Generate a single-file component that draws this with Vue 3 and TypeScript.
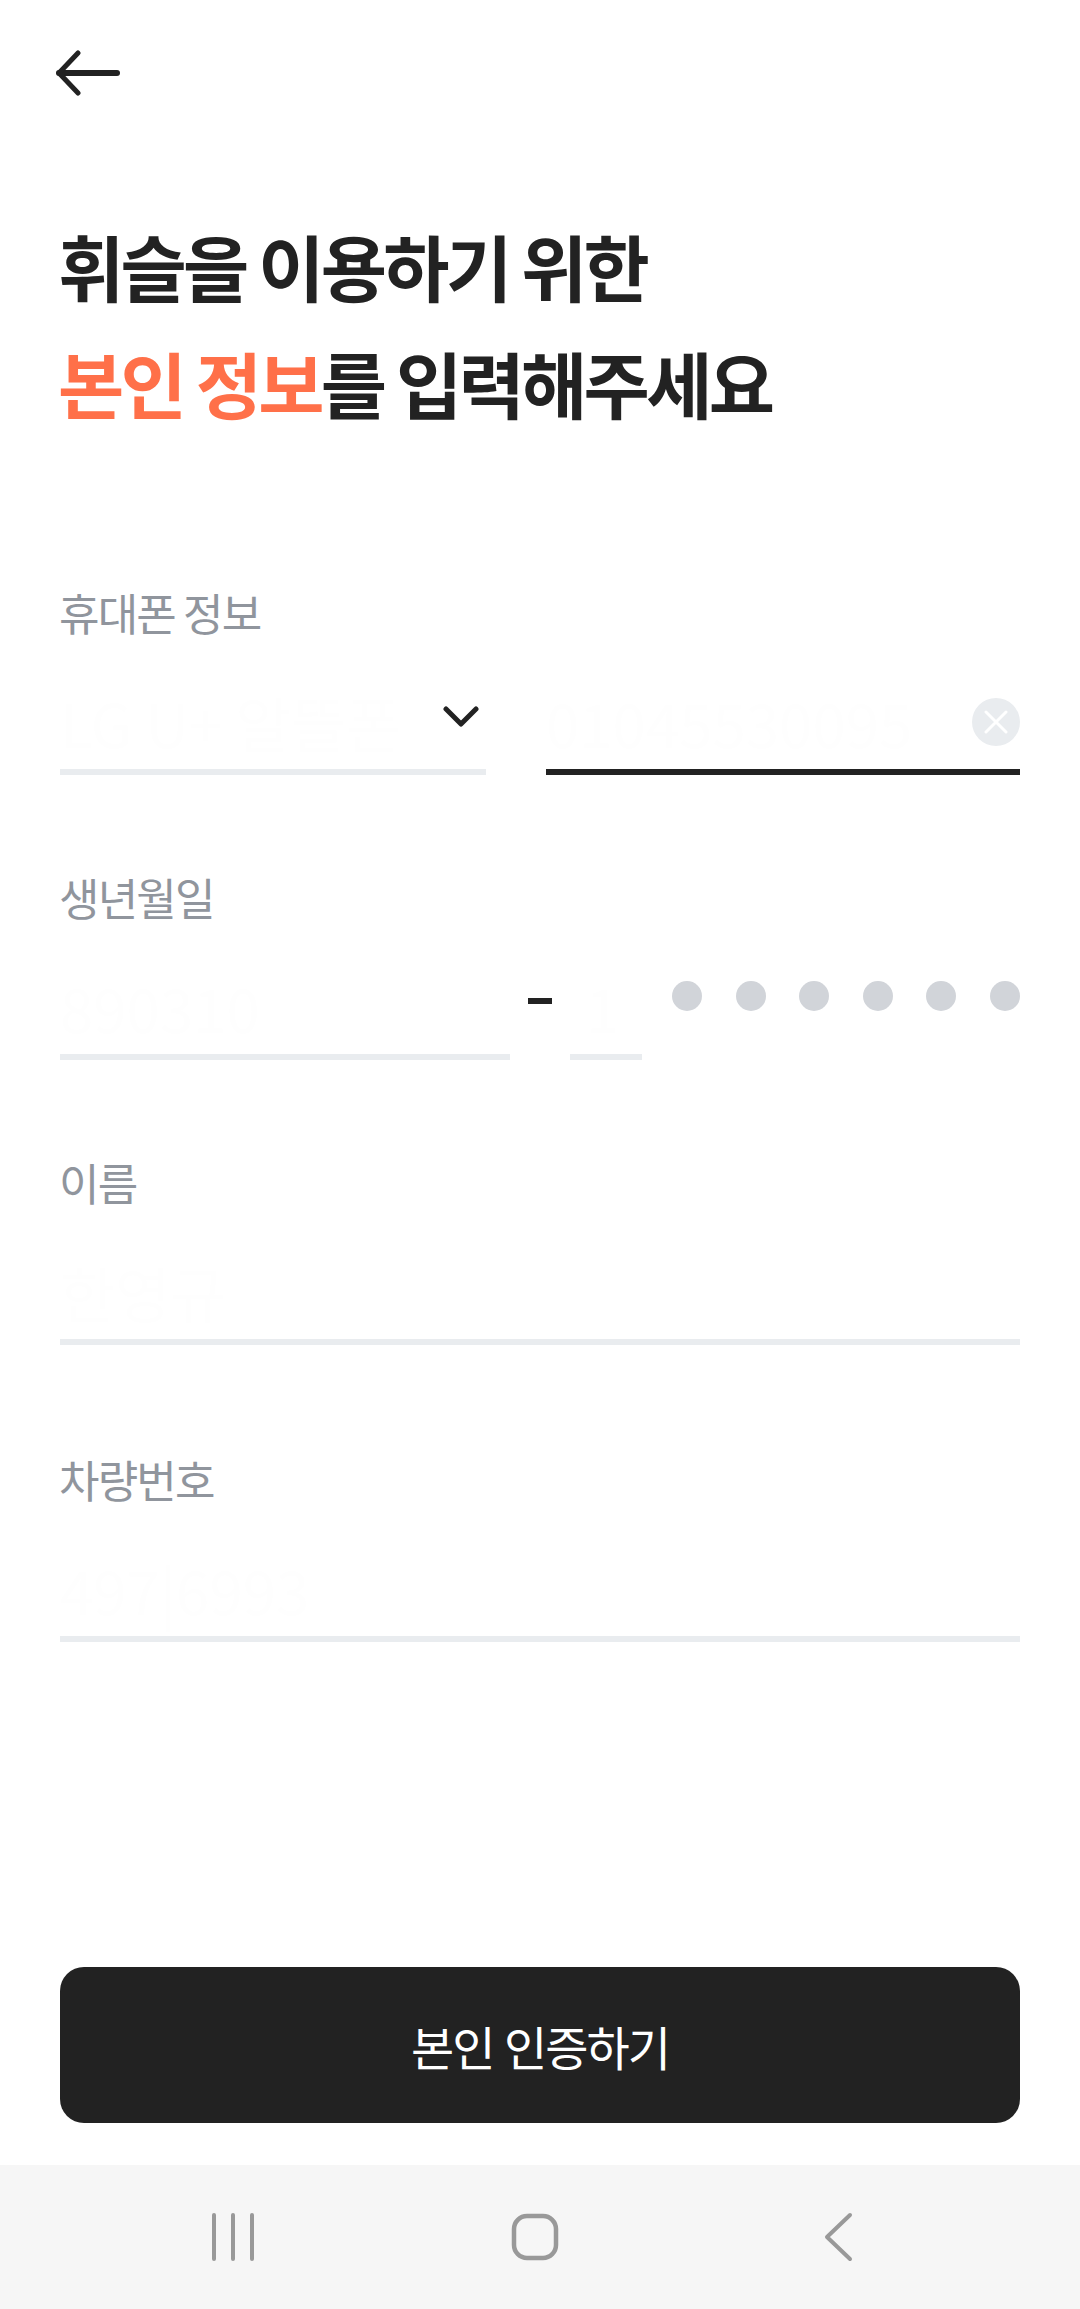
<script setup lang="ts">
const fields = [
  { label: '이름', value: '한영규', extra: false },
  { label: '차량번호', value: '497|6993', extra: true },
]
const dots = [1, 2, 3, 4, 5, 6]
</script>

<template>
  <div class="page">
    <header class="top">
      <svg class="back" width="66" height="46" viewBox="0 0 66 46" fill="none">
        <path d="M3 23H61" stroke="#222" stroke-width="6" stroke-linecap="round" />
        <path d="M22 3L3 23L22 43" stroke="#222" stroke-width="5" stroke-linecap="round" stroke-linejoin="round" />
      </svg>
    </header>

    <h1 class="title">
      <span class="line">휘슬을 이용하기 위한</span>
      <span class="line"><em>본인 정보</em>를 입력해주세요</span>
    </h1>

    <section class="field first">
      <label class="label">휴대폰 정보</label>
      <div class="row">
        <div class="input carrier">
          <span class="ghost">LG U+ 알뜰폰</span>
          <svg class="chevron" width="36" height="22" viewBox="0 0 36 22" fill="none">
            <path d="M3 3L18 18L33 3" stroke="#222" stroke-width="5" stroke-linecap="round" stroke-linejoin="round" />
          </svg>
        </div>
        <div class="input phone">
          <span class="ghost">01045530095</span>
          <span class="clear">
            <svg width="24" height="24" viewBox="0 0 24 24" fill="none">
              <path d="M2 2L22 22M22 2L2 22" stroke="#fff" stroke-width="3" stroke-linecap="round" />
            </svg>
          </span>
        </div>
      </div>
    </section>

    <section class="field">
      <label class="label">생년월일</label>
      <div class="row">
        <div class="input front"><span class="ghost">890310</span></div>
        <span class="dash"></span>
        <div class="input back-digit"><span class="ghost">1</span></div>
        <div class="dots">
          <i v-for="d in dots" :key="d" class="dot"></i>
        </div>
      </div>
    </section>

    <section v-for="f in fields" :key="f.label" class="field" :class="{ extra: f.extra }">
      <label class="label">{{ f.label }}</label>
      <div class="row">
        <div class="input full"><span class="ghost">{{ f.value }}</span></div>
      </div>
    </section>

    <div class="spacer"></div>

    <button class="cta">본인 인증하기</button>

    <nav class="navbar">
      <svg width="44" height="48" viewBox="0 0 44 48" fill="none">
        <path d="M3 2V46M22 2V46M41 2V46" stroke="#999" stroke-width="4" stroke-linecap="round" />
      </svg>
      <svg width="48" height="48" viewBox="0 0 48 48" fill="none">
        <rect x="3" y="3" width="42" height="42" rx="13" stroke="#999" stroke-width="4.5" />
      </svg>
      <svg width="30" height="50" viewBox="0 0 30 50" fill="none">
        <path d="M27 3L4 25L27 47" stroke="#999" stroke-width="4" stroke-linecap="round" stroke-linejoin="round" />
      </svg>
    </nav>
  </div>
</template>

<style>
html, body { margin: 0; background: #fff; }
</style>

<style scoped>
.page {
  width: 1080px;
  height: 2309px;
  display: flex;
  flex-direction: column;
  background: #fff;
  font-family: "Noto Sans CJK KR", "Noto Sans", sans-serif;
  color: #222;
  overflow: hidden;
}
.top { height: 97px; padding: 50px 0 0 56px; box-sizing: border-box; }
.back { display: block; }
.title {
  margin: 109px 0 0;
  padding-left: 58px;
  font-size: 72px;
  font-weight: 700;
  letter-spacing: -3.7px;
}
.line { display: block; height: 117px; line-height: 117px; }
.title em { font-style: normal; color: #ff7049; }
.field { padding: 0 60px; height: 285px; display: flex; flex-direction: column; box-sizing: border-box; flex: none; }
.field.first { margin-top: 144px; }
.field.extra { margin-top: 12px; }
.label {
  display: block;
  font-size: 44px;
  line-height: 60px;
  height: 60px;
  margin: -2px 0 2px -1px;
  color: #90959d;
  letter-spacing: -1.8px;
}
.row { display: flex; align-items: flex-end; height: 66px; margin-top: 65px; }
.input {
  height: 100px;
  box-sizing: border-box;
  border-bottom: 6px solid #e9ecef;
  display: flex;
  align-items: center;
  justify-content: space-between;
  font-size: 60px;
  line-height: 94px;
  white-space: nowrap;
}
.ghost { color: #fefefe; }
.carrier { width: 426px; padding-right: 7px; }
.chevron { margin-bottom: 10px; }
.phone { width: 474px; margin-left: 60px; border-bottom-color: #222; }
.clear {
  width: 48px;
  height: 48px;
  border-radius: 50%;
  background: #e9ecef;
  display: flex;
  align-items: center;
  justify-content: center;
}
.front { width: 450px; }
.dash { width: 24px; height: 6px; background: #222; margin: 0 18px 56px; }
.back-digit { width: 72px; padding-left: 16px; }
.dots { flex: 1; display: flex; justify-content: space-between; margin-left: 30px; margin-bottom: 49px; }
.dot { width: 30px; height: 30px; border-radius: 50%; background: #d1d4d9; display: block; }
.full { width: 100%; }
.spacer { flex: 1; }
.cta {
  display: block;
  margin: 0 60px;
  width: 960px;
  height: 156px;
  flex: none;
  border: 0;
  border-radius: 24px;
  background: #222;
  color: #fff;
  font-family: inherit;
  font-size: 47px;
  letter-spacing: -2px;
  word-spacing: 2px;
}
.navbar {
  margin-top: 42px;
  height: 144px;
  flex: none;
  background: #f6f6f6;
  display: grid;
  grid-template-columns: 300px 312px 1fr;
  padding-left: 211px;
  box-sizing: border-box;
  align-items: center;
}
.navbar svg { display: block; }
</style>
